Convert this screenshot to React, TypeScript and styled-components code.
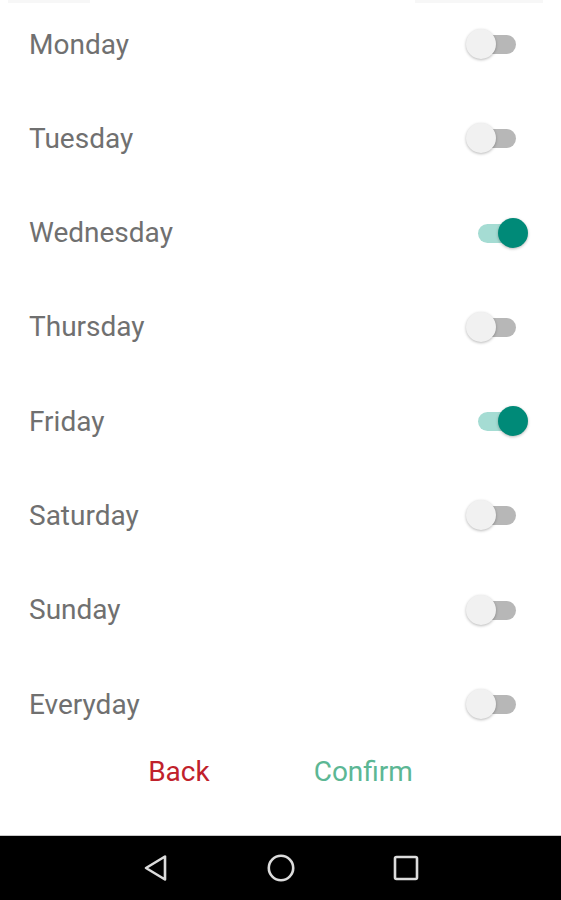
import React, { useState } from "react"
import { styled, createGlobalStyle } from "styled-components"

const GlobalStyle = createGlobalStyle`
    html, body {
        margin: 0;
        padding: 0;
        background: #ffffff;
    }
    body {
        font-family: Roboto, "Noto Sans", Arial, sans-serif;
    }
`

const StyledScreen = styled.div`
    width: 561px;
    height: 900px;
    display: flex;
    flex-direction: column;
    overflow: hidden;
    background: #ffffff;
`

const StyledContent = styled.div`
    height: 835px;
    display: flex;
    flex-direction: column;
`

const StyledTopEdge = styled.div`
    display: flex;
    justify-content: space-between;
    height: 3px;
    padding: 0 18px 0 8px;
    margin-bottom: -3px;
`

const StyledEdgeBit = styled.div<{ $w: number }>`
    width: ${({ $w }) => $w}px;
    height: 3px;
    background: #f7f7f7;
`

const StyledList = styled.div`
    display: flex;
    flex-direction: column;
    gap: 6.3px;
`

const StyledRow = styled.div`
    height: 88px;
    display: flex;
    align-items: center;
    justify-content: space-between;
    padding: 0 32px 0 29px;
`

const StyledDay = styled.span`
    font-size: 28px;
    color: #707070;
`

const StyledSwitch = styled.button`
    position: relative;
    width: 64px;
    height: 34px;
    padding: 0;
    border: none;
    background: transparent;
    cursor: pointer;
`

const StyledTrack = styled.span<{ $on: boolean }>`
    position: absolute;
    top: 8px;
    left: ${({ $on }) => ($on ? 13 : 3)}px;
    width: 48px;
    height: 19px;
    border-radius: 10px;
    background: ${({ $on }) => ($on ? "#a5dcd3" : "#b7b7b7")};
`

const StyledThumb = styled.span<{ $on: boolean }>`
    position: absolute;
    top: 2px;
    left: ${({ $on }) => ($on ? 33 : 1)}px;
    width: 30px;
    height: 30px;
    border-radius: 50%;
    background: ${({ $on }) => ($on ? "#008a78" : "#f1f1f1")};
    box-shadow: 0 1px 3px rgba(0, 0, 0, 0.28);
`

const StyledActions = styled.div`
    height: 46px;
    display: flex;
    align-items: center;
    justify-content: center;
    gap: 104px;
`

const StyledAction = styled.button<{ $color: string }>`
    font-family: Roboto, "Noto Sans", Arial, sans-serif;
    font-size: 28px;
    color: ${({ $color }) => $color};
    background: none;
    border: none;
    padding: 0;
    cursor: pointer;
`

const StyledNav = styled.nav`
    height: 64px;
    border-top: 1px solid #c9c9c9;
    background: #000000;
    display: flex;
    align-items: center;
    justify-content: center;
    gap: 65px;
`

const StyledNavSlot = styled.div`
    width: 60px;
    height: 40px;
    display: flex;
    align-items: center;
    justify-content: center;
`

const days = ["Monday", "Tuesday", "Wednesday", "Thursday", "Friday", "Saturday", "Sunday", "Everyday"]

const Switch: React.FC<{ on: boolean; onToggle: () => void }> = ({ on, onToggle }) => (
    <StyledSwitch onClick={onToggle} aria-pressed={on}>
        <StyledTrack $on={on} />
        <StyledThumb $on={on} />
    </StyledSwitch>
)

const App: React.FC = () => {
    const [selected, setSelected] = useState<Record<string, boolean>>({
        Wednesday: true,
        Friday: true,
    })

    const toggle = (day: string) => setSelected(prev => ({ ...prev, [day]: !prev[day] }))

    return (
        <>
            <GlobalStyle />
            <StyledScreen>
                <StyledContent>
                    <StyledTopEdge>
                        <StyledEdgeBit $w={82} />
                        <StyledEdgeBit $w={128} />
                    </StyledTopEdge>
                    <StyledList>
                        {days.map(day => (
                            <StyledRow key={day}>
                                <StyledDay>{day}</StyledDay>
                                <Switch on={!!selected[day]} onToggle={() => toggle(day)} />
                            </StyledRow>
                        ))}
                    </StyledList>
                    <StyledActions>
                        <StyledAction $color="#c0212b">Back</StyledAction>
                        <StyledAction $color="#5cb794">Confirm</StyledAction>
                    </StyledActions>
                </StyledContent>
                <StyledNav>
                    <StyledNavSlot>
                        <svg width="26" height="30" viewBox="0 0 26 30">
                            <path d="M3 15 L22 3.5 V26.5 Z" fill="none" stroke="#dcdcdc" strokeWidth="2.6" strokeLinejoin="round" />
                        </svg>
                    </StyledNavSlot>
                    <StyledNavSlot>
                        <svg width="30" height="30" viewBox="0 0 30 30">
                            <circle cx="15" cy="15" r="12.2" fill="none" stroke="#dcdcdc" strokeWidth="2.6" />
                        </svg>
                    </StyledNavSlot>
                    <StyledNavSlot>
                        <svg width="28" height="28" viewBox="0 0 28 28">
                            <rect x="3" y="3" width="22" height="22" rx="1.5" fill="none" stroke="#dcdcdc" strokeWidth="2.6" />
                        </svg>
                    </StyledNavSlot>
                </StyledNav>
            </StyledScreen>
        </>
    )
}

export default App
